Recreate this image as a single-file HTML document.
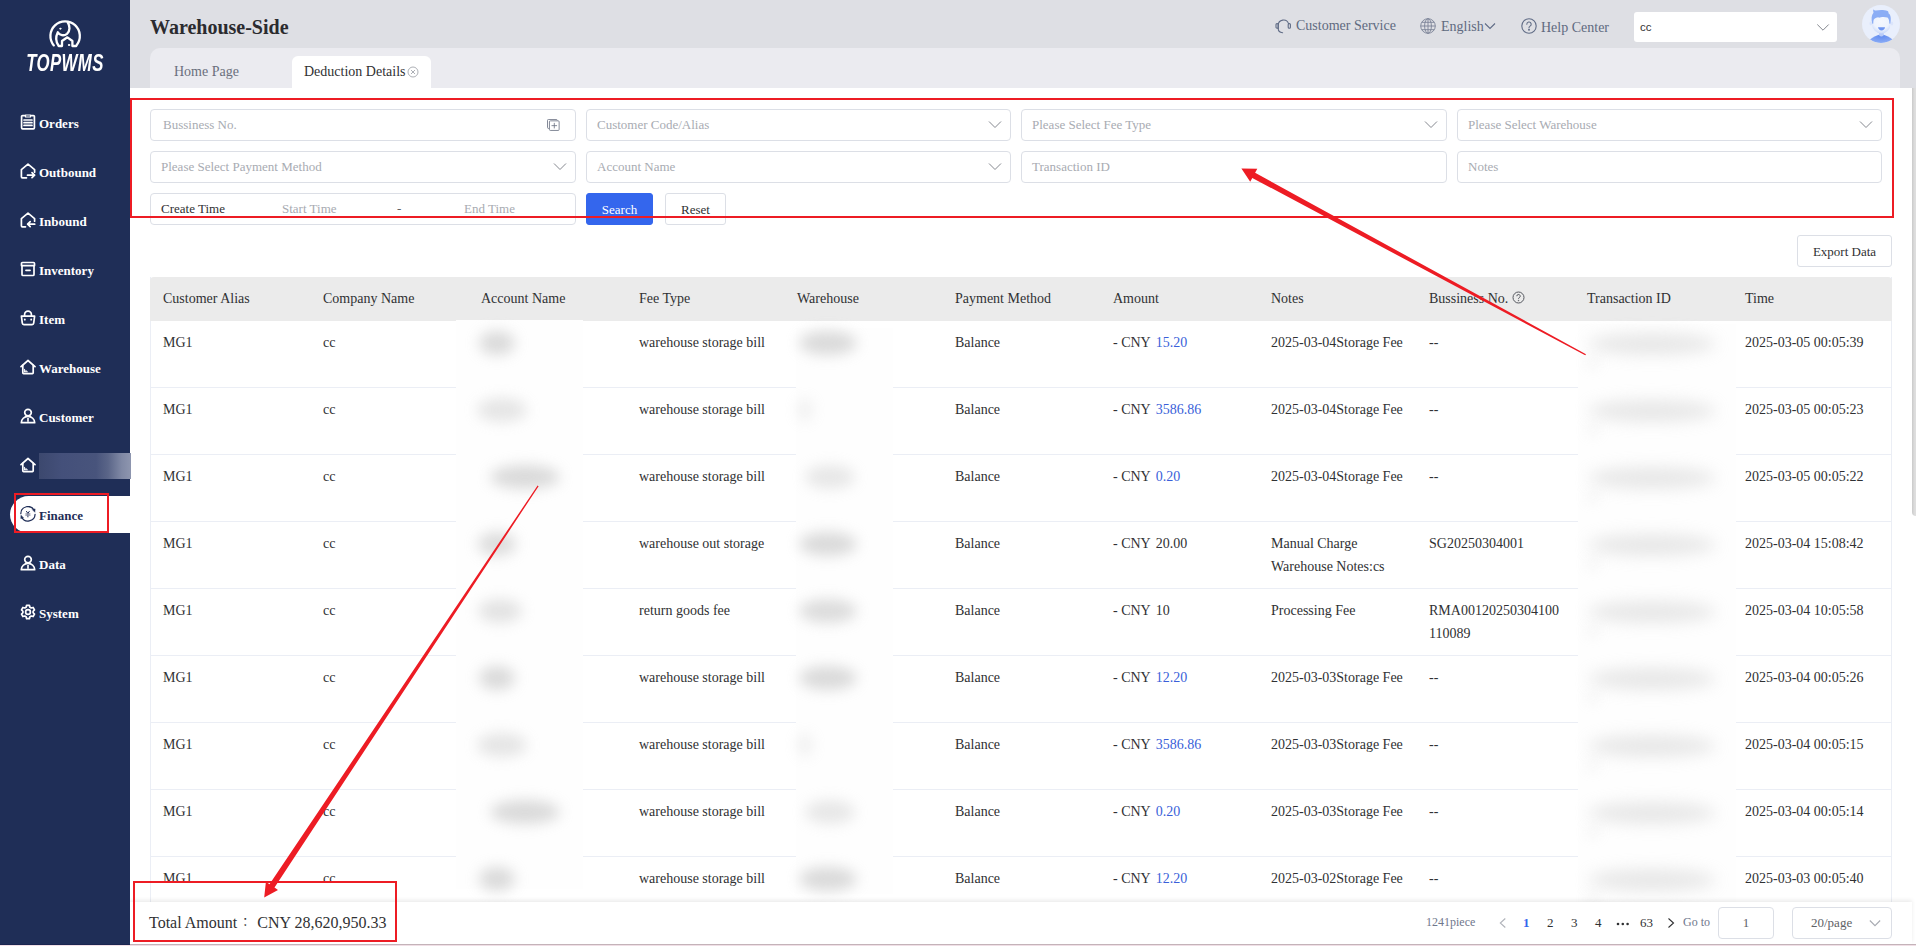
<!DOCTYPE html>
<html lang="en">
<head>
<meta charset="utf-8">
<title>Warehouse-Side - Deduction Details</title>
<style>
*{box-sizing:border-box;margin:0;padding:0}
html,body{width:1916px;height:946px;overflow:hidden;background:#f0dfe6;font-family:"Liberation Serif","Noto Serif CJK SC",serif;font-size:14px;color:#303133}
#app{position:absolute;left:0;top:0;width:1916px;height:944px;background:#dedfe4;overflow:hidden}
/* sidebar */
#side{position:absolute;left:0;top:0;width:130px;height:944px;background:#1f2e57}
#logo{position:absolute;left:0;top:0;width:130px;height:90px}
#logo svg{position:absolute;left:45px;top:15px}
#logo .brand{position:absolute;left:0;width:130px;top:50px;text-align:center;font-family:"Liberation Sans",sans-serif;font-style:italic;font-weight:bold;font-size:23.5px;line-height:26px;color:#fff;letter-spacing:0.5px;transform:scaleX(.715);transform-origin:65px 0}
.mi{position:absolute;left:0;width:130px;height:38px;color:#fff;font-weight:bold;font-size:13px;line-height:38px}
.mi svg{position:absolute;left:20px;top:10px}
.mi span{position:absolute;left:39px;top:1px}
.mi.act{left:10px;width:120px;height:37px;background:#fff;border-radius:19px 0 0 19px;color:#1f2e57}
.mi.act svg{left:10px}
.mi.act span{left:29px}
#sblur{position:absolute;left:39px;top:6px;width:92px;height:26px;background:linear-gradient(90deg,#3c486e 0%,#44507a 25%,#48547c 62%,#5a6588 75%,#8089a5 90%,#8e96af 100%);z-index:3}
/* header */
#title{position:absolute;left:150px;top:15px;font-size:20px;font-weight:bold;color:#2b2b2f;line-height:24px}
.hl{position:absolute;top:16px;font-size:14px;line-height:20px;color:#606a80;white-space:nowrap}
#usel{position:absolute;left:1634px;top:12px;width:203px;height:30px;background:#fff;border-radius:3px;font-family:"Liberation Sans",sans-serif;font-size:11.500px;line-height:31px;padding-left:6px;color:#333}
.hi{position:absolute}
#avatar{position:absolute;left:1862px;top:5px;width:38px;height:38px}
/* tabs */
#tabs{position:absolute;left:150px;top:48px;width:1750px;height:40px;background:#ebebf0;border-radius:10px 10px 0 0}
.tab{position:absolute;font-size:14px;line-height:20px;color:#6a6f7d;white-space:nowrap}
#tabact{position:absolute;left:142px;top:8px;width:139px;height:32px;background:#fff;border-radius:6px 6px 0 0}
/* main */
#main{position:absolute;left:130px;top:88px;width:1786px;height:856px;background:#fff;overflow:hidden}
#sbt{position:absolute;left:1912px;top:88px;width:8px;height:428px;background:linear-gradient(90deg,#cacaca,#dcdcdc 30%,#e6e6e6);border-radius:0 0 4px 4px}
.inp{position:absolute;height:32px;border:1px solid #dcdfe6;border-radius:4px;background:#fff;font-size:13px;line-height:30px;color:#a8abb2;padding-left:10px;white-space:nowrap}
.inp svg.ar{position:absolute;right:8px;top:10px}
.btn{position:absolute;height:32px;border:1px solid #dcdfe6;border-radius:3px;background:#fff;font-size:13px;line-height:32px;text-align:center;color:#303133}
.btn.pri{background:#3466ed;border-color:#3466ed;color:#fff}
/* table */
#tbl{position:absolute;left:20px;top:189px;width:1742px;height:700px;border-left:1px solid #ebeef5;border-right:1px solid #ebeef5}
#thead{position:absolute;left:-1px;top:0;width:1742px;height:44px;background:#ebebeb;border-radius:4px 4px 0 0}
.th{position:absolute;top:12px;font-size:14px;line-height:20px;color:#303133;white-space:nowrap}
.row{position:absolute;left:0;width:1740px;height:67px;border-bottom:1px solid #ebeef5}
.c{position:absolute;top:10px;font-size:14px;line-height:23px;color:#303133;white-space:nowrap}
.c.w{white-space:nowrap}
.bl{color:#3a5fd9}
.blur{position:absolute;background:#fefefe}
.blob{position:absolute;border-radius:50%;background:#c6c6c6;filter:blur(7px);opacity:.6}
/* footer */
#foot{position:absolute;left:0;top:814px;width:1782px;height:42px;background:#fff;box-shadow:0 -2px 4px rgba(0,0,0,.08)}
#total{position:absolute;left:19px;top:9px;font-size:16px;line-height:24px;color:#303133;white-space:nowrap}
.jp{font-family:"Noto Sans CJK JP",sans-serif;display:inline-block;width:16px;text-align:center;font-size:12px;line-height:16px;vertical-align:1px}
.pg{position:absolute;top:11px;font-size:13px;line-height:20px;color:#303133;white-space:nowrap}
/* annotations */
.red{position:absolute;border:2px solid #ed1c24}
#anno{position:absolute;left:0;top:0;pointer-events:none}
</style>
</head>
<body>
<div id="app">

<div id="side">
  <div id="logo">
    <svg width="40" height="35" viewBox="45 15 40 35" fill="none" stroke="#fff" stroke-width="2.3" stroke-linecap="round" stroke-linejoin="round">
      <path d="M53.800 45.400A14.700 14.700 0 1 1 76.600 45.200L76.200 46H72.400V41L67.400 37.300L62 41V46H58.700C56.200 42.500 55.400 37 57.800 32.200C59.500 35.500 64 36.200 67 33.800C70.200 31 70.200 26 67.500 22.200"/>
      <circle cx="60.300" cy="28.700" r=".6" fill="#fff" stroke-width="1"/><circle cx="69" cy="45" r=".7" fill="#fff" stroke-width="1"/>
    </svg>
    <div class="brand">TOPWMS</div>
  </div>
  <div class="mi" style="top:104px"><svg width="16" height="16" viewBox="0 0 16 16" fill="none" stroke="#fff" stroke-width="1.7" stroke-linecap="round" stroke-linejoin="round"><path d="M5 1.6H2.6a1 1 0 0 0-1 1v11.2a1 1 0 0 0 1 1h10.8a1 1 0 0 0 1-1V2.6a1 1 0 0 0-1-1H11"/><path d="M5.5 1h5v2h-5z" stroke-width="1.2"/><path d="M4 6h8M4 8.7h8M4 11.4h8"/></svg><span>Orders</span></div>
  <div class="mi" style="top:153px"><svg width="16" height="16" viewBox="0 0 16 16" fill="none" stroke="#fff" stroke-width="1.7" stroke-linecap="round" stroke-linejoin="round"><path d="M6.5 14.8H2.4a1 1 0 0 1-1-1V6.6L8 1.2l6.6 5.4v2.6"/><path d="M7.5 12.2h7M12 9.7l2.6 2.5-2.6 2.5"/></svg><span>Outbound</span></div>
  <div class="mi" style="top:202px"><svg width="16" height="16" viewBox="0 0 16 16" fill="none" stroke="#fff" stroke-width="1.7" stroke-linecap="round" stroke-linejoin="round"><path d="M5.5 14.8H2.4a1 1 0 0 1-1-1V6.6L8 1.2l6.6 5.4v2.6"/><path d="M14.7 12.2h-7M10.2 9.7l-2.6 2.5 2.6 2.5"/></svg><span>Inbound</span></div>
  <div class="mi" style="top:251px"><svg width="16" height="16" viewBox="0 0 16 16" fill="none" stroke="#fff" stroke-width="1.7" stroke-linecap="round" stroke-linejoin="round"><path d="M1.5 4.6V2.5a1 1 0 0 1 1-1h11a1 1 0 0 1 1 1v2.1z"/><path d="M2 4.8v8.7a1 1 0 0 0 1 1h10a1 1 0 0 0 1-1V4.8"/><path d="M6 9.3h4" stroke-width="1.8"/></svg><span>Inventory</span></div>
  <div class="mi" style="top:300px"><svg width="16" height="16" viewBox="0 0 16 16" fill="none" stroke="#fff" stroke-width="1.7" stroke-linecap="round" stroke-linejoin="round"><path d="M1.4 6.2h13.2l-.9 7a1.6 1.6 0 0 1-1.6 1.4H3.9a1.6 1.6 0 0 1-1.6-1.4z"/><path d="M4.6 6V4.6a3.4 3.4 0 0 1 6.8 0V6"/><path d="M4.8 9.3v.4M11.2 9.3v.4" stroke-width="1.8"/></svg><span>Item</span></div>
  <div class="mi" style="top:349px"><svg width="16" height="16" viewBox="0 0 16 16" fill="none" stroke="#fff" stroke-width="1.7" stroke-linecap="round" stroke-linejoin="round"><path d="M1 7.6L8 1.5l7 6.1"/><path d="M2.8 6.4v7.4a.8.8 0 0 0 .8.8h8.8a.8.8 0 0 0 .8-.8V6.4"/><path d="M4.6 12.6v-2.3M6 12.6v-1.2M4.4 12.8h3" stroke-width="1"/></svg><span>Warehouse</span></div>
  <div class="mi" style="top:398px"><svg width="16" height="16" viewBox="0 0 16 16" fill="none" stroke="#fff" stroke-width="1.7" stroke-linecap="round" stroke-linejoin="round"><circle cx="8" cy="4.6" r="3.3"/><path d="M1.3 14.7a6.7 6.3 0 0 1 13.4 0z"/><path d="M8 10.6v2.6" stroke-width="1.6"/></svg><span>Customer</span></div>
  <div class="mi" style="top:447px"><svg width="16" height="16" viewBox="0 0 16 16" fill="none" stroke="#fff" stroke-width="1.7" stroke-linecap="round" stroke-linejoin="round"><path d="M1 7.6L8 1.5l7 6.1"/><path d="M2.8 6.4v7.4a.8.8 0 0 0 .8.8h8.8a.8.8 0 0 0 .8-.8V6.4"/><path d="M4.6 12.6v-2.3M6 12.6v-1.2M4.4 12.8h3" stroke-width="1"/></svg><div id="sblur"></div></div>
  <div class="mi act" style="top:496px"><svg width="16" height="16" viewBox="0 0 16 16" fill="none" stroke="#1f2e57" stroke-width="1.25" stroke-linecap="round"><path d="M.8 7.700A7.100 7.100 0 0 1 14.300 4.600"/><path d="M15.100 8.300A7.100 7.100 0 0 1 1.500 10.800"/><path d="M12.600 3.500L15.100 2.900L14.900 5.900zM3.200 11.900L.8 12.500L1 9.500z" fill="#1f2e57" stroke-width=".5"/><path d="M6.500 5.400L7.900 7.400L9.300 5.400M7.900 7.400V10.900" stroke-width="1"/><path d="M5.800 7.900h4.200M5.800 9.200h4.200" stroke="#8f93a6" stroke-width="1.1"/></svg><span>Finance</span></div>
  <div class="mi" style="top:545px"><svg width="16" height="16" viewBox="0 0 16 16" fill="none" stroke="#fff" stroke-width="1.7" stroke-linecap="round" stroke-linejoin="round"><circle cx="8" cy="4.6" r="3.3"/><path d="M1.3 14.7a6.7 6.3 0 0 1 13.4 0z"/><path d="M8 10.6v2.6" stroke-width="1.6"/></svg><span>Data</span></div>
  <div class="mi" style="top:594px"><svg width="16" height="16" viewBox="0 0 16 16" fill="none" stroke="#fff" stroke-width="1.7" stroke-linecap="round" stroke-linejoin="round"><path d="M6.6 1.3h2.8l.5 1.9 1.3.75 1.9-.5 1.4 2.4-1.4 1.4v1.5l1.4 1.4-1.4 2.4-1.9-.5-1.3.75-.5 1.9H6.6l-.5-1.9-1.3-.75-1.9.5-1.4-2.4 1.4-1.4V7.25L1.5 5.85l1.4-2.4 1.9.5 1.3-.75z"/><circle cx="8" cy="8" r="2.4"/></svg><span>System</span></div>
</div>

<div id="title">Warehouse-Side</div>
<div class="hl" style="left:1296px;top:16px">Customer Service</div>
<div class="hl" style="left:1441px;top:17px">English</div>
<div class="hl" style="left:1541px;top:18px">Help Center</div>
<div id="usel">cc</div>
<svg class="hi" style="left:1275px;top:18px" width="16" height="16" viewBox="0 0 16 16" fill="none" stroke="#5f6b85" stroke-width="1.1" stroke-linecap="round"><path d="M3.2 10.5V7.2a5.3 5.3 0 0 1 10.3-1.6"/><rect x="1" y="5.6" width="2.2" height="4.6" rx="1"/><rect x="13.2" y="5.6" width="2.2" height="4.6" rx="1"/><path d="M3.2 10.6c0 2.6 1.6 4 4.4 4.2"/></svg>
<svg class="hi" style="left:1420px;top:18px" width="16" height="16" viewBox="0 0 16 16" fill="none" stroke="#7a8296" stroke-width=".9"><circle cx="8" cy="8" r="7.3"/><ellipse cx="8" cy="8" rx="3.4" ry="7.3"/><path d="M8 .7v14.6M.7 8h14.6M1.8 4.3h12.4M1.8 11.7h12.4"/></svg>
<svg class="hi" style="left:1484px;top:22px" width="12" height="9" viewBox="0 0 12 9" fill="none" stroke="#5f6b85" stroke-width="1.1"><path d="M1 1.5l5 5 5-5"/></svg>
<svg class="hi" style="left:1521px;top:18px" width="16" height="16" viewBox="0 0 16 16" fill="none" stroke="#5f6b85" stroke-width="1.1" stroke-linecap="round"><circle cx="8" cy="8" r="7.2"/><path d="M5.8 6.2a2.2 2.2 0 1 1 3.3 1.9c-.8.5-1.1.9-1.1 1.7"/><circle cx="8" cy="11.8" r=".4" fill="#5f6b85"/></svg>
<svg class="hi" style="left:1816px;top:23px" width="14" height="10" viewBox="0 0 14 10" fill="none" stroke="#85888f" stroke-width="1"><path d="M1.300 1.500l5.700 5.700 5.700-5.700"/></svg>

<div id="avatar"><svg width="38" height="38" viewBox="0 0 38 38"><defs><clipPath id="avc"><circle cx="19" cy="19" r="19"/></clipPath><radialGradient id="avf" cx=".5" cy=".35" r=".7"><stop offset="0" stop-color="#f4f7fe"/><stop offset=".6" stop-color="#eef3fd"/><stop offset="1" stop-color="#c3d4f9"/></radialGradient><radialGradient id="avb" cx=".5" cy=".2" r=".8"><stop offset="0" stop-color="#628cf0"/><stop offset="1" stop-color="#8eaef5"/></radialGradient></defs><circle cx="19" cy="19" r="19" fill="#e9effc"/><g clip-path="url(#avc)"><path d="M8 34.500C11 32 15 29.800 19.300 29.200C23.600 29.800 27.600 32 30.600 34.500L26 37.500L19.300 38.500L12.500 37.500z" fill="url(#avb)"/><rect x="17" y="26.500" width="4.800" height="5" rx="2.200" fill="#b9cbf8"/><ellipse cx="8.800" cy="18.500" rx="1.300" ry="2" fill="#dbe5fb"/><ellipse cx="29.900" cy="18.500" rx="1.300" ry="2" fill="#dbe5fb"/><ellipse cx="19.300" cy="19" rx="9.200" ry="9.600" fill="url(#avf)"/><path d="M10.300 18.800C9 14 9.500 10 11.500 7.800C11.300 6.500 11 5.200 11.200 4.200C12.200 5.200 13 5.600 14 5.600C17 4.800 22 4.600 25.500 6C26.300 6.200 26.600 7.600 26.600 8.400C28.800 9.500 29.400 13.500 28.300 18.800C27.800 18.900 27.500 18.600 27.300 18.200C27.300 15.800 26.800 13.800 25.500 12.600C23 11.800 19 11.800 17 12.800L16.300 12.200C14.500 12.400 12.600 13.200 11.800 14.400C11.300 15.600 11.300 17.200 11.300 18.400C11 18.800 10.700 18.900 10.300 18.800z" fill="#8badf5"/><path d="M16 22.300H23.100C22.800 24.300 21.300 25.400 19.500 25.400C17.700 25.400 16.300 24.300 16 22.300z" fill="#6f96f1"/></g></svg></div>

<div id="tabs">
  <div class="tab" style="left:24px;top:14px">Home Page</div>
  <div id="tabact"></div>
  <div class="tab" style="left:154px;top:14px;color:#303133">Deduction Details</div>
  <svg style="position:absolute;left:257px;top:18px" width="12" height="12" viewBox="0 0 12 12" fill="none" stroke="#a3a6ad" stroke-width=".9"><circle cx="6" cy="6" r="5"/><path d="M4 4l4 4M8 4l-4 4"/></svg>
</div>

<div id="main">
  <!-- FILTERS -->
  <div class="inp" style="left:20px;top:21px;width:426px;padding-left:12px">Bussiness No.<svg style="position:absolute;right:15px;top:9px" width="13" height="12" viewBox="0 0 14 13" fill="none" stroke="#6a7183" stroke-width=".9"><path d="M2.200 10.200H1.500a1 1 0 0 1-1-1V1.500a1 1 0 0 1 1-1h8.500a1 1 0 0 1 1 1v.300"/><rect x="2.600" y="2" width="10.500" height="10.400" rx="1" fill="#fff"/><path d="M7.850 4.200v6M4.850 7.200h6"/></svg></div>
  <div class="inp" style="left:456px;top:21px;width:425px">Customer Code/Alias<svg class="ar" width="14" height="10" viewBox="0 0 14 10" fill="none" stroke="#85888f" stroke-width="1"><path d="M1 1.5l6 6 6-6"/></svg></div>
  <div class="inp" style="left:891px;top:21px;width:426px">Please Select Fee Type<svg class="ar" width="14" height="10" viewBox="0 0 14 10" fill="none" stroke="#85888f" stroke-width="1"><path d="M1 1.5l6 6 6-6"/></svg></div>
  <div class="inp" style="left:1327px;top:21px;width:425px">Please Select Warehouse<svg class="ar" width="14" height="10" viewBox="0 0 14 10" fill="none" stroke="#85888f" stroke-width="1"><path d="M1 1.5l6 6 6-6"/></svg></div>
  <div class="inp" style="left:20px;top:63px;width:426px">Please Select Payment Method<svg class="ar" width="14" height="10" viewBox="0 0 14 10" fill="none" stroke="#85888f" stroke-width="1"><path d="M1 1.5l6 6 6-6"/></svg></div>
  <div class="inp" style="left:456px;top:63px;width:425px">Account Name<svg class="ar" width="14" height="10" viewBox="0 0 14 10" fill="none" stroke="#85888f" stroke-width="1"><path d="M1 1.5l6 6 6-6"/></svg></div>
  <div class="inp" style="left:891px;top:63px;width:426px">Transaction ID</div>
  <div class="inp" style="left:1327px;top:63px;width:425px">Notes</div>
  <div class="inp" style="left:20px;top:105px;width:426px"><span style="color:#303133">Create Time</span><span style="position:absolute;left:131px">Start Time</span><span style="position:absolute;left:246px;color:#606266">-</span><span style="position:absolute;left:313px">End Time</span></div>
  <div class="btn pri" style="left:456px;top:105px;width:67px">Search</div>
  <div class="btn" style="left:535px;top:105px;width:61px">Reset</div>
  <div class="btn" style="left:1667px;top:147px;width:95px">Export Data</div>
  <!-- /FILTERS -->
  <!-- TABLE -->
  <div id="tbl">
  <div id="thead">
  <div class="th" style="left:13px">Customer Alias</div>
  <div class="th" style="left:173px">Company Name</div>
  <div class="th" style="left:331px">Account Name</div>
  <div class="th" style="left:489px">Fee Type</div>
  <div class="th" style="left:647px">Warehouse</div>
  <div class="th" style="left:805px">Payment Method</div>
  <div class="th" style="left:963px">Amount</div>
  <div class="th" style="left:1121px">Notes</div>
  <div class="th" style="left:1279px">Bussiness No. <svg style="vertical-align:-1px;margin-left:0px" width="13" height="13" viewBox="0 0 13 13" fill="none" stroke="#55585f" stroke-width="1"><circle cx="6.5" cy="6.5" r="5.5"/><path d="M4.8 5.2a1.7 1.7 0 1 1 2.5 1.5c-.6.3-.8.6-.8 1.2"/><circle cx="6.5" cy="9.6" r=".3" fill="#55585f"/></svg></div>
  <div class="th" style="left:1437px">Transaction ID</div>
  <div class="th" style="left:1595px">Time</div>
  </div>
  <div class="row" style="top:44px">
  <div class="c" style="left:12px">MG1</div>
  <div class="c" style="left:172px">cc</div>
  <div class="c" style="left:488px">warehouse storage bill</div>
  <div class="c" style="left:804px">Balance</div>
  <div class="c" style="left:962px">- CNY <span class="bl" style="margin-left:2px">15.20</span></div>
  <div class="c w" style="left:1120px">2025-03-04Storage Fee</div>
  <div class="c w" style="left:1278px">--</div>
  <div class="c" style="left:1594px">2025-03-05 00:05:39</div>
  </div>
  <div class="row" style="top:111px">
  <div class="c" style="left:12px">MG1</div>
  <div class="c" style="left:172px">cc</div>
  <div class="c" style="left:488px">warehouse storage bill</div>
  <div class="c" style="left:804px">Balance</div>
  <div class="c" style="left:962px">- CNY <span class="bl" style="margin-left:2px">3586.86</span></div>
  <div class="c w" style="left:1120px">2025-03-04Storage Fee</div>
  <div class="c w" style="left:1278px">--</div>
  <div class="c" style="left:1594px">2025-03-05 00:05:23</div>
  </div>
  <div class="row" style="top:178px">
  <div class="c" style="left:12px">MG1</div>
  <div class="c" style="left:172px">cc</div>
  <div class="c" style="left:488px">warehouse storage bill</div>
  <div class="c" style="left:804px">Balance</div>
  <div class="c" style="left:962px">- CNY <span class="bl" style="margin-left:2px">0.20</span></div>
  <div class="c w" style="left:1120px">2025-03-04Storage Fee</div>
  <div class="c w" style="left:1278px">--</div>
  <div class="c" style="left:1594px">2025-03-05 00:05:22</div>
  </div>
  <div class="row" style="top:245px">
  <div class="c" style="left:12px">MG1</div>
  <div class="c" style="left:172px">cc</div>
  <div class="c" style="left:488px">warehouse out storage</div>
  <div class="c" style="left:804px">Balance</div>
  <div class="c" style="left:962px">- CNY <span style="margin-left:2px">20.00</span></div>
  <div class="c w" style="left:1120px">Manual Charge<br>Warehouse Notes:cs</div>
  <div class="c w" style="left:1278px">SG20250304001</div>
  <div class="c" style="left:1594px">2025-03-04 15:08:42</div>
  </div>
  <div class="row" style="top:312px">
  <div class="c" style="left:12px">MG1</div>
  <div class="c" style="left:172px">cc</div>
  <div class="c" style="left:488px">return goods fee</div>
  <div class="c" style="left:804px">Balance</div>
  <div class="c" style="left:962px">- CNY <span style="margin-left:2px">10</span></div>
  <div class="c w" style="left:1120px">Processing Fee</div>
  <div class="c w" style="left:1278px">RMA00120250304100<br>110089</div>
  <div class="c" style="left:1594px">2025-03-04 10:05:58</div>
  </div>
  <div class="row" style="top:379px">
  <div class="c" style="left:12px">MG1</div>
  <div class="c" style="left:172px">cc</div>
  <div class="c" style="left:488px">warehouse storage bill</div>
  <div class="c" style="left:804px">Balance</div>
  <div class="c" style="left:962px">- CNY <span class="bl" style="margin-left:2px">12.20</span></div>
  <div class="c w" style="left:1120px">2025-03-03Storage Fee</div>
  <div class="c w" style="left:1278px">--</div>
  <div class="c" style="left:1594px">2025-03-04 00:05:26</div>
  </div>
  <div class="row" style="top:446px">
  <div class="c" style="left:12px">MG1</div>
  <div class="c" style="left:172px">cc</div>
  <div class="c" style="left:488px">warehouse storage bill</div>
  <div class="c" style="left:804px">Balance</div>
  <div class="c" style="left:962px">- CNY <span class="bl" style="margin-left:2px">3586.86</span></div>
  <div class="c w" style="left:1120px">2025-03-03Storage Fee</div>
  <div class="c w" style="left:1278px">--</div>
  <div class="c" style="left:1594px">2025-03-04 00:05:15</div>
  </div>
  <div class="row" style="top:513px">
  <div class="c" style="left:12px">MG1</div>
  <div class="c" style="left:172px">cc</div>
  <div class="c" style="left:488px">warehouse storage bill</div>
  <div class="c" style="left:804px">Balance</div>
  <div class="c" style="left:962px">- CNY <span class="bl" style="margin-left:2px">0.20</span></div>
  <div class="c w" style="left:1120px">2025-03-03Storage Fee</div>
  <div class="c w" style="left:1278px">--</div>
  <div class="c" style="left:1594px">2025-03-04 00:05:14</div>
  </div>
  <div class="row" style="top:580px">
  <div class="c" style="left:12px">MG1</div>
  <div class="c" style="left:172px">cc</div>
  <div class="c" style="left:488px">warehouse storage bill</div>
  <div class="c" style="left:804px">Balance</div>
  <div class="c" style="left:962px">- CNY <span class="bl" style="margin-left:2px">12.20</span></div>
  <div class="c w" style="left:1120px">2025-03-02Storage Fee</div>
  <div class="c w" style="left:1278px">--</div>
  <div class="c" style="left:1594px">2025-03-03 00:05:40</div>
  </div>
  <div class="blur" style="left:305px;top:43px;width:127px;height:569px"></div>
  <div class="blur" style="left:645px;top:51px;width:97px;height:566px"></div>
  <div class="blur" style="left:1427px;top:47px;width:158px;height:580px"></div>
  <div class="blob" style="left:328px;top:54px;width:36px;height:24px;opacity:0.64"></div>
  <div class="blob" style="left:648px;top:54px;width:58px;height:24px;opacity:0.64"></div>
  <div class="blob" style="left:1437px;top:56px;width:128px;height:22px;opacity:.4;filter:blur(8px)"></div>
  <div class="blob" style="left:1437px;top:82px;width:10px;height:8px;opacity:.35"></div>
  <div class="blob" style="left:326px;top:121px;width:50px;height:24px;opacity:0.44"></div>
  <div class="blob" style="left:646px;top:121px;width:16px;height:24px;opacity:0.24"></div>
  <div class="blob" style="left:1437px;top:123px;width:128px;height:22px;opacity:.4;filter:blur(8px)"></div>
  <div class="blob" style="left:1437px;top:149px;width:10px;height:8px;opacity:.35"></div>
  <div class="blob" style="left:339px;top:188px;width:70px;height:24px;opacity:0.64"></div>
  <div class="blob" style="left:654px;top:188px;width:50px;height:24px;opacity:0.40"></div>
  <div class="blob" style="left:1437px;top:190px;width:128px;height:22px;opacity:.4;filter:blur(8px)"></div>
  <div class="blob" style="left:1437px;top:216px;width:10px;height:8px;opacity:.35"></div>
  <div class="blob" style="left:327px;top:255px;width:38px;height:24px;opacity:0.60"></div>
  <div class="blob" style="left:648px;top:255px;width:58px;height:24px;opacity:0.64"></div>
  <div class="blob" style="left:1437px;top:257px;width:128px;height:22px;opacity:.4;filter:blur(8px)"></div>
  <div class="blob" style="left:1437px;top:283px;width:10px;height:8px;opacity:.35"></div>
  <div class="blob" style="left:327px;top:322px;width:44px;height:24px;opacity:0.48"></div>
  <div class="blob" style="left:648px;top:322px;width:58px;height:24px;opacity:0.60"></div>
  <div class="blob" style="left:1437px;top:324px;width:128px;height:22px;opacity:.4;filter:blur(8px)"></div>
  <div class="blob" style="left:1437px;top:350px;width:10px;height:8px;opacity:.35"></div>
  <div class="blob" style="left:328px;top:389px;width:36px;height:24px;opacity:0.64"></div>
  <div class="blob" style="left:648px;top:389px;width:58px;height:24px;opacity:0.64"></div>
  <div class="blob" style="left:1437px;top:391px;width:128px;height:22px;opacity:.4;filter:blur(8px)"></div>
  <div class="blob" style="left:1437px;top:417px;width:10px;height:8px;opacity:.35"></div>
  <div class="blob" style="left:326px;top:456px;width:50px;height:24px;opacity:0.44"></div>
  <div class="blob" style="left:646px;top:456px;width:16px;height:24px;opacity:0.24"></div>
  <div class="blob" style="left:1437px;top:458px;width:128px;height:22px;opacity:.4;filter:blur(8px)"></div>
  <div class="blob" style="left:1437px;top:484px;width:10px;height:8px;opacity:.35"></div>
  <div class="blob" style="left:339px;top:523px;width:70px;height:24px;opacity:0.64"></div>
  <div class="blob" style="left:654px;top:523px;width:50px;height:24px;opacity:0.40"></div>
  <div class="blob" style="left:1437px;top:525px;width:128px;height:22px;opacity:.4;filter:blur(8px)"></div>
  <div class="blob" style="left:1437px;top:551px;width:10px;height:8px;opacity:.35"></div>
  <div class="blob" style="left:328px;top:590px;width:36px;height:24px;opacity:0.64"></div>
  <div class="blob" style="left:648px;top:590px;width:58px;height:24px;opacity:0.64"></div>
  <div class="blob" style="left:1437px;top:592px;width:128px;height:22px;opacity:.4;filter:blur(8px)"></div>
  <div class="blob" style="left:1437px;top:618px;width:10px;height:8px;opacity:.35"></div>
  </div>
  <!-- /TABLE -->
  <!-- FOOTER -->
  <div id="foot">
  <div id="total">Total Amount<span class="jp">：</span> CNY 28,620,950.33</div>
  <div class="pg" style="left:1296px;top:10px;color:#6f778c;font-size:12px">1241piece</div>
  <svg style="position:absolute;left:1369px;top:15px" width="8" height="12" viewBox="0 0 8 12" fill="none" stroke="#b0b3ba" stroke-width="1.1"><path d="M6.300 1.500L1.300 6l5 4.500"/></svg>
  <div class="pg" style="left:1393px;color:#3466ed;font-weight:bold">1</div>
  <div class="pg" style="left:1417px">2</div>
  <div class="pg" style="left:1441px">3</div>
  <div class="pg" style="left:1465px">4</div>
  <svg style="position:absolute;left:1486px;top:20px" width="14" height="4" viewBox="0 0 14 4" fill="#303133"><circle cx="2" cy="2" r="1.300"/><circle cx="6.800" cy="2" r="1.300"/><circle cx="11.600" cy="2" r="1.300"/></svg>
  <div class="pg" style="left:1510px">63</div>
  <svg style="position:absolute;left:1537px;top:15px" width="8" height="12" viewBox="0 0 8 12" fill="none" stroke="#303133" stroke-width="1.100"><path d="M1.500 1.500l5 4.500-5 4.500"/></svg>
  <div class="pg" style="left:1553px;top:10px;color:#6f778c;font-size:12px">Go to</div>
  <div class="inp" style="left:1588px;top:5px;width:56px;height:32px;padding:0;text-align:center;color:#606266">1</div>
  <div class="inp" style="left:1662px;top:5px;width:100px;height:32px;padding-left:18px;color:#606266">20/page<svg class="ar" style="right:10px;top:11px" width="12" height="9" viewBox="0 0 14 10" fill="none" stroke="#a8abb2" stroke-width="1.3"><path d="M1 1.5l6 6 6-6"/></svg></div>
  </div>
  <!-- /FOOTER -->
</div>
<div id="sbt"></div>

<div class="red" style="left:130px;top:98px;width:1764px;height:120px"></div>
<div class="red" style="left:14px;top:493px;width:95px;height:40px"></div>
<div class="red" style="left:133px;top:881px;width:264px;height:61px"></div>
<svg id="anno" width="1916" height="946" viewBox="0 0 1916 946"><g fill="#ed1c24"><path d="M1241.400 168.600L1257.300 168.800L1255.100 172.700L1586 354.300L1585.200 355.300L1252.300 177.900L1250.200 181.800z"/><path d="M264.200 897.500L265.900 881.800L269.500 884.200L537.600 485.500L538.600 486.200L274.500 887.500L278 889.900z"/></g></svg>
</div>
<div style="position:absolute;left:0;top:944px;width:130px;height:1px;background:#1a2550"></div><div style="position:absolute;left:130px;top:944px;width:1786px;height:1px;background:#c4b3b9"></div>
</body>
</html>
